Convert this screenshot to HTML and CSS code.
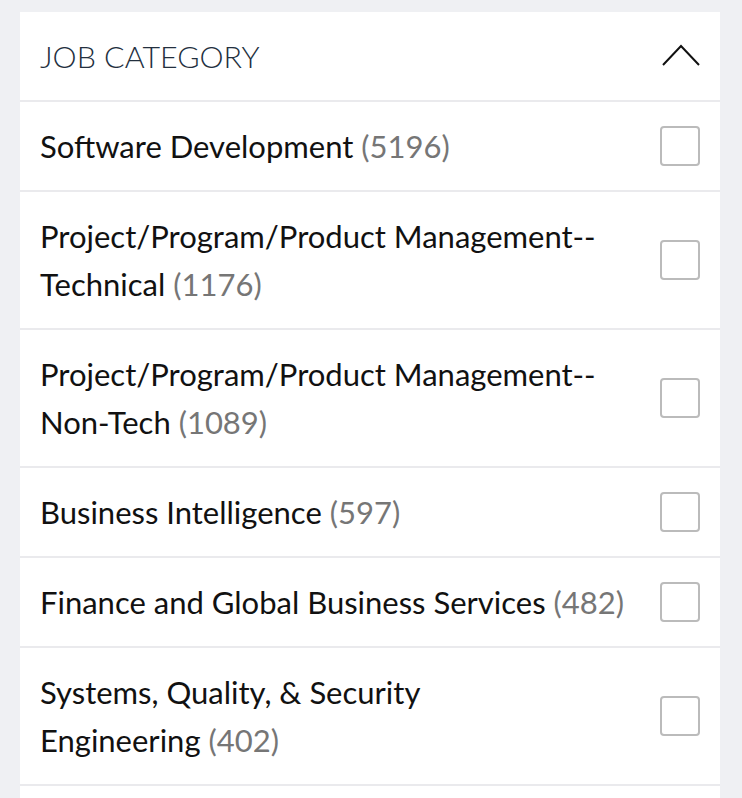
FILE: index.html
```html
<!DOCTYPE html>
<html>
<head>
<meta charset="utf-8">
<link rel="stylesheet" href="styles.css">
</head>
<body>
<section class="panel">
  <header class="panel-head">
    <h2 class="panel-title">JOB CATEGORY</h2>
    <svg class="chevron" width="38" height="24" viewBox="0 0 38 24"><polyline points="1,22 19,3 37,22" fill="none" stroke="#111" stroke-width="2"/></svg>
  </header>
  <ul class="list">
    <li class="item"><span class="label">Software Development <span class="count">(5196)</span></span><span class="box"></span></li>
    <li class="item"><span class="label">Project/Program/Product Management--Technical <span class="count">(1176)</span></span><span class="box"></span></li>
    <li class="item"><span class="label">Project/Program/Product Management--<span class="nowrap">Non-Tech</span> <span class="count">(1089)</span></span><span class="box"></span></li>
    <li class="item"><span class="label">Business Intelligence <span class="count">(597)</span></span><span class="box"></span></li>
    <li class="item"><span class="label">Finance and Global Business Services <span class="count">(482)</span></span><span class="box"></span></li>
    <li class="item"><span class="label">Systems, Quality, &amp; Security<br>Engineering <span class="count">(402)</span></span><span class="box"></span></li>
    <li class="item"><span class="label">Operations, IT, &amp; Support Engineering <span class="count">(390)</span></span><span class="box"></span></li>
  </ul>
</section>
</body>
</html>
```

FILE: styles.css
```css
html, body {
  margin: 0;
  padding: 0;
  background: #eff0f3;
}
body {
  padding: 12px 22px 0 20px;
  font-family: Lato, "Open Sans", sans-serif;
  height: 798px;
  overflow: hidden;
  box-sizing: border-box;
}
.panel {
  background: #fff;
}
.panel-head {
  display: flex;
  align-items: center;
  justify-content: space-between;
  height: 88px;
  padding: 0 20px;
  border-bottom: 2px solid #eaeaed;
}
.panel-title {
  margin: 0;
  font-weight: 300;
  font-size: 30.4px;
  color: #232f3e;
  letter-spacing: 0;
}
.chevron {
  display: block;
  margin-top: -2px;
}
.list {
  list-style: none;
  margin: 0;
  padding: 0;
}
.item {
  display: flex;
  align-items: center;
  gap: 20px;
  padding: 20px 20px;
  border-bottom: 2px solid #eaeaed;
}
.label {
  flex: 1;
  font-size: 31px;
  line-height: 48px;
  color: #111;
}
.nowrap {
  white-space: nowrap;
}
.count {
  color: #767676;
}
.box {
  flex: none;
  width: 36px;
  height: 36px;
  border: 2px solid #bbb;
  border-radius: 4px;
}
```
